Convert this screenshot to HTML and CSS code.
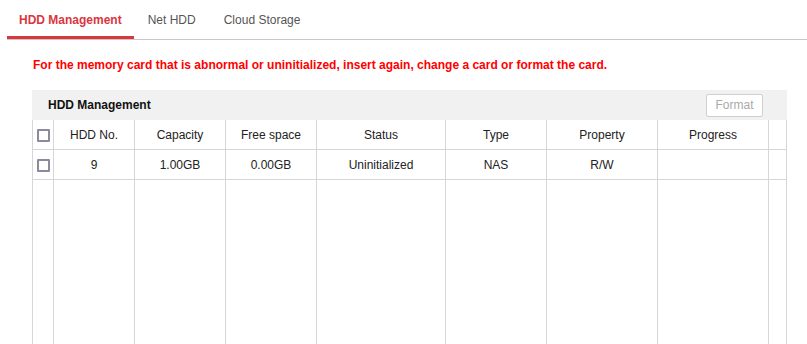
FILE: index.html
```html
<!DOCTYPE html>
<html>
<head>
  <meta charset="UTF-8">
  <title>Storage</title>
  <link rel="stylesheet" href="styles.css">
</head>
<body>

  <div class="tabs">
    <a class="tab active">HDD Management</a>
    <a class="tab">Net HDD</a>
    <a class="tab">Cloud Storage</a>
  </div>

  <div class="content">
    <p class="warning">For the memory card that is abnormal or uninitialized, insert again, change a card or format the card.</p>

    <div class="panel">
      <div class="panel-head">
        <span class="panel-title">HDD Management</span>
        <button class="btn" disabled>Format</button>
      </div>

      <table class="grid">
        <colgroup>
          <col style="width: 21px">
          <col style="width: 81px">
          <col style="width: 91px">
          <col style="width: 91px">
          <col style="width: 129px">
          <col style="width: 101px">
          <col style="width: 111px">
          <col style="width: 111px">
          <col>
        </colgroup>
        <tr class="head">
          <td><span class="check"></span></td>
          <td>HDD No.</td>
          <td>Capacity</td>
          <td>Free space</td>
          <td>Status</td>
          <td>Type</td>
          <td>Property</td>
          <td>Progress</td>
          <td></td>
        </tr>
        <tr>
          <td><span class="check"></span></td>
          <td>9</td>
          <td>1.00GB</td>
          <td>0.00GB</td>
          <td>Uninitialized</td>
          <td>NAS</td>
          <td>R/W</td>
          <td></td>
          <td></td>
        </tr>
        <tr class="filler">
          <td></td><td></td><td></td><td></td><td></td><td></td><td></td><td></td><td></td>
        </tr>
      </table>
    </div>
  </div>

</body>
</html>
```

FILE: styles.css
```css
body {
  margin: 0;
  font-family: "Liberation Sans", Arial, sans-serif;
  background-color: #fff;
  color: #333;
  overflow: hidden;
}

.tabs {
  display: flex;
  margin-left: 7px;
  border-bottom: 1px solid #c9c9c9;
  height: 39px;
}

.tab {
  display: block;
  padding: 13px 14px 0;
  font-size: 12px;
  color: #555;
  box-sizing: border-box;
  height: 39px;
  margin-bottom: -1px;
}

.tab.active {
  padding: 13px 12px 0;
  color: #d9363e;
  font-weight: bold;
  border-bottom: 3px solid #d9363e;
}

.content {
  padding: 0 20px 0 32px;
}

.warning {
  margin: 18px 0 0 1px;
  color: #ff0000;
  font-size: 12px;
  font-weight: bold;
  line-height: 14px;
}

.panel {
  margin-top: 18px;
}

.panel-head {
  display: flex;
  align-items: center;
  justify-content: space-between;
  height: 30px;
  background-color: #f1f1f1;
  padding: 0 24px 0 16px;
}

.panel-title {
  font-size: 12px;
  font-weight: bold;
  color: #111;
}

.btn {
  width: 57px;
  height: 23px;
  padding: 0;
  background-color: #fff;
  border: 1px solid #cfcfcf;
  border-radius: 2px;
  color: #aaa;
  font-family: inherit;
  font-size: 12px;
}

.grid {
  width: 755px;
  border-collapse: collapse;
  table-layout: fixed;
}

.grid td {
  border: 1px solid #d6d6d6;
  height: 29px;
  padding: 0;
  text-align: center;
  font-size: 12px;
  color: #222;
}

.grid tr:first-child td {
  border-top: none;
}

.grid .filler td {
  height: 200px;
}

.check {
  display: inline-block;
  width: 9px;
  height: 9px;
  border: 2px solid #8c8a9c;
  border-radius: 1px;
  vertical-align: middle;
}
```
